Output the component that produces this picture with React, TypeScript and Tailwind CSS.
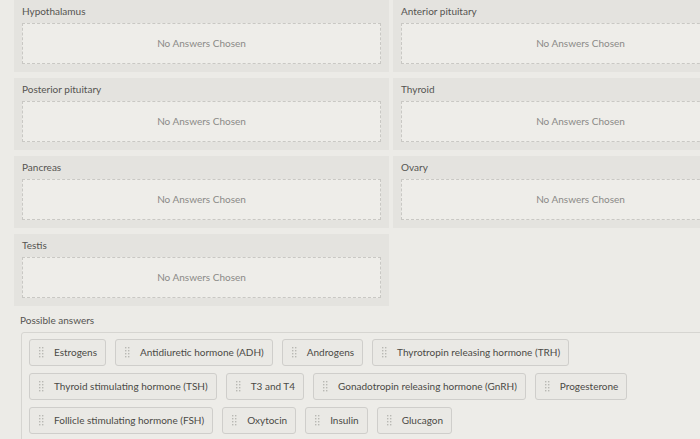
const leftTargets = ["Hypothalamus", "Posterior pituitary", "Pancreas", "Testis"]
const rightTargets = ["Anterior pituitary", "Thyroid", "Ovary"]

const answerRows: string[][] = [
    ["Estrogens", "Antidiuretic hormone (ADH)", "Androgens", "Thyrotropin releasing hormone (TRH)"],
    ["Thyroid stimulating hormone (TSH)", "T3 and T4", "Gonadotropin releasing hormone (GnRH)", "Progesterone"],
    ["Follicle stimulating hormone (FSH)", "Oxytocin", "Insulin", "Glucagon"],
]

function DragHandle() {
    return (
        <svg width="5" height="11" viewBox="0 0 5 11" className="shrink-0">
            {[0, 1, 2, 3].map((r) => (
                <g key={r} fill="#b9b8b4">
                    <rect x="0" y={r * 3} width="1.4" height="1.4" />
                    <rect x="3" y={r * 3} width="1.4" height="1.4" />
                </g>
            ))}
        </svg>
    )
}

function DropTarget({ label }: { label: string }) {
    return (
        <div className="h-[72px] bg-[#e4e3df] px-2 pt-[5px]">
            <div className="h-[12px] text-[10px] leading-[12px] text-[#555451]">{label}</div>
            <div className="mt-[6px] flex h-[41px] items-center justify-center border border-dashed border-[#c9c8c4] bg-[#eeede9] text-[10px] text-[#8b8a87]">
                No Answers Chosen
            </div>
        </div>
    )
}

function AnswerChip({ text }: { text: string }) {
    return (
        <div className="flex h-[27px] items-center gap-[10px] rounded-[3px] border border-[#cfcecb] bg-[#eae9e5] pl-[9px] pr-[8px] text-[10px] text-[#4a4946]">
            <DragHandle />
            <span className="whitespace-nowrap">{text}</span>
        </div>
    )
}

export default function App() {
    return (
        <div
            className="h-[439px] w-[700px] overflow-hidden bg-[#ecebe7]"
            style={{ fontFamily: "Lato, 'Open Sans', sans-serif" }}
        >
            <div className="w-[800px]">
                <div className="ml-[14px] flex gap-[4px]">
                    <div className="flex w-[375px] flex-col gap-[6px]">
                        {leftTargets.map((t) => (
                            <DropTarget key={t} label={t} />
                        ))}
                    </div>
                    <div className="flex w-[375px] flex-col gap-[6px]">
                        {rightTargets.map((t) => (
                            <DropTarget key={t} label={t} />
                        ))}
                    </div>
                </div>
                <div className="ml-[20px] mt-[8px] text-[10px] leading-[12px] text-[#555451]">Possible answers</div>
                <div className="ml-[21px] mt-[6px] flex flex-col gap-[7px] rounded-[3px] border border-[#d6d5d1] bg-[#edece8] px-[7px] pb-[8px] pt-[6px]">
                    {answerRows.map((row, i) => (
                        <div key={i} className="flex gap-[9px]">
                            {row.map((a) => (
                                <AnswerChip key={a} text={a} />
                            ))}
                        </div>
                    ))}
                </div>
            </div>
        </div>
    )
}
